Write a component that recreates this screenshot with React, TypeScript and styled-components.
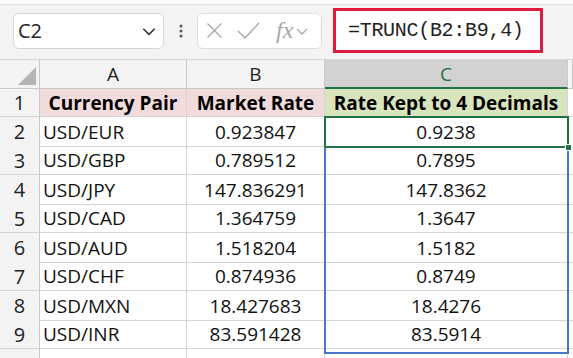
import styled, { createGlobalStyle } from "styled-components";

const GlobalStyle = createGlobalStyle`
  body {
    margin: 0;
    background: #ffffff;
    font-family: "Open Sans", Lato, sans-serif;
  }
  * { box-sizing: border-box; }
`;

interface RowData {
  pair: string;
  rate: string;
  kept: string;
}

const rows: RowData[] = [
  { pair: "USD/EUR", rate: "0.923847", kept: "0.9238" },
  { pair: "USD/GBP", rate: "0.789512", kept: "0.7895" },
  { pair: "USD/JPY", rate: "147.836291", kept: "147.8362" },
  { pair: "USD/CAD", rate: "1.364759", kept: "1.3647" },
  { pair: "USD/AUD", rate: "1.518204", kept: "1.5182" },
  { pair: "USD/CHF", rate: "0.874936", kept: "0.8749" },
  { pair: "USD/MXN", rate: "18.427683", kept: "18.4276" },
  { pair: "USD/INR", rate: "83.591428", kept: "83.5914" },
];

const Chevron = ({ color = "#444", size = 14 }: { color?: string; size?: number }) => (
  <svg width={size} height={size} viewBox="0 0 14 14">
    <polyline points="2,5 7,10 12,5" fill="none" stroke={color} strokeWidth="1.4" />
  </svg>
);

const App = () => {
  return (
    <Page>
      <GlobalStyle />
      <TopStrip />
      <FormulaBar>
        <NameBox>
          <NameText>C2</NameText>
          <Chevron color="#333" size={16} />
        </NameBox>
        <Dots>
          <svg width="4" height="14" viewBox="0 0 4 14">
            <circle cx="2" cy="2" r="1.5" fill="#555" />
            <circle cx="2" cy="7" r="1.5" fill="#555" />
            <circle cx="2" cy="12" r="1.5" fill="#555" />
          </svg>
        </Dots>
        <ActionBox>
          <svg width="17" height="17" viewBox="0 0 17 17">
            <path d="M1.5 1.5 L15.5 15.5 M15.5 1.5 L1.5 15.5" stroke="#a6a6a6" strokeWidth="1.3" />
          </svg>
          <svg width="23" height="17" viewBox="0 0 23 17">
            <polyline points="1,9 8,16 22,1" fill="none" stroke="#a6a6a6" strokeWidth="1.3" />
          </svg>
          <FxLabel>fx</FxLabel>
          <Chevron color="#a6a6a6" size={14} />
        </ActionBox>
        <FormulaInput>=TRUNC(B2:B9,4)</FormulaInput>
      </FormulaBar>

      <SheetWrap>
        <Grid>
          <Corner>
            <svg width="20" height="20" viewBox="0 0 20 20">
              <polygon points="20,2 20,20 2,20" fill="#b4b4b4" />
            </svg>
          </Corner>
          <ColHeader>A</ColHeader>
          <ColHeader>B</ColHeader>
          <ColHeader $active>C</ColHeader>
          <ColHeader />

          <RowHeader>1</RowHeader>
          <HeadCell $bg="#f2dcdb">Currency Pair</HeadCell>
          <HeadCell $bg="#f2dcdb">Market Rate</HeadCell>
          <HeadCell $bg="#d8e4bc">Rate Kept to 4 Decimals</HeadCell>
          <Cell />

          {rows.map((r, i) => (
            <Row key={r.pair} $h={i % 2 === 0 ? 30 : 29}>
              <RowHeader>{i + 2}</RowHeader>
              <Cell>{r.pair}</Cell>
              <Cell $center>{r.rate}</Cell>
              <Cell $center>{r.kept}</Cell>
              <Cell />
            </Row>
          ))}

          <RowHeader />
          <Cell />
          <Cell />
          <Cell />
          <Cell />
        </Grid>
        <RangeBox />
        <ActiveBox>
          <FillHandle />
        </ActiveBox>
      </SheetWrap>
    </Page>
  );
};

export default App;

const Page = styled.div`
  width: 573px;
  height: 358px;
  overflow: hidden;
  background: #f3f3f3;
`;

const TopStrip = styled.div`
  height: 5px;
  background: #fbfbfb;
  border-bottom: 1px solid #e2e2e2;
`;

const FormulaBar = styled.div`
  display: flex;
  align-items: center;
  height: 54px;
  padding-left: 13px;
`;

const NameBox = styled.div`
  display: flex;
  align-items: center;
  justify-content: space-between;
  width: 151px;
  height: 36px;
  margin-top: -3px;
  padding: 0 6px 0 4px;
  background: #ffffff;
  border: 1px solid #d6d6d6;
  border-radius: 6px;
`;

const NameText = styled.span`
  font-family: "Open Sans", sans-serif;
  font-size: 20px;
  color: #222;
`;

const Dots = styled.div`
  display: flex;
  align-items: center;
  justify-content: center;
  width: 33px;
  margin-top: -3px;
`;

const ActionBox = styled.div`
  display: flex;
  align-items: center;
  gap: 14px;
  width: 125px;
  height: 36px;
  margin-top: -3px;
  padding: 0 0 0 8px;
  background: #ffffff;
  border: 1px solid #dedede;
  border-radius: 6px;
`;

const FxLabel = styled.span`
  font-family: "Liberation Serif", serif;
  font-style: italic;
  font-size: 24px;
  color: #a6a6a6;
  margin-left: 2px;
  margin-right: -12px;
`;

const FormulaInput = styled.div`
  display: flex;
  align-items: center;
  width: 210px;
  height: 45px;
  margin-left: 11px;
  margin-top: -3px;
  padding-left: 12px;
  background: #ffffff;
  border: 3px solid #e0193f;
  font-family: "Liberation Mono", monospace;
  font-size: 20px;
  color: #222;
  letter-spacing: -0.3px;
`;

const SheetWrap = styled.div`
  position: relative;
`;

const Grid = styled.div`
  display: grid;
  grid-template-columns: 40px 147px 138px 243px 5px;
  grid-template-rows: 29px 28px;
  grid-auto-rows: 29px;
  background: #ffffff;
  border-top: 1px solid #dadada;
  font-size: 19px;
`;

const Row = styled.div<{ $h: number }>`
  display: contents;
  & > * {
    height: ${(p) => p.$h}px;
  }
`;

const Corner = styled.div`
  display: flex;
  align-items: flex-end;
  justify-content: flex-end;
  padding: 0 3px 3px 0;
  background: #f3f3f3;
  border-right: 1px solid #c8c8c8;
  border-bottom: 1px solid #c8c8c8;
`;

const ColHeader = styled.div<{ $active?: boolean }>`
  display: flex;
  align-items: center;
  justify-content: center;
  background: ${(p) => (p.$active ? "#d2d2d2" : "#f3f3f3")};
  color: ${(p) => (p.$active ? "#217346" : "#222")};
  border-right: 1px solid #c8c8c8;
  border-bottom: ${(p) => (p.$active ? "2px solid #217346" : "1px solid #c8c8c8")};
`;

const RowHeader = styled.div`
  display: flex;
  align-items: center;
  justify-content: center;
  background: #f3f3f3;
  color: #222;
  font-size: 20px;
  border-right: 1px solid #c8c8c8;
  border-bottom: 1px solid #d4d4d4;
`;

const Cell = styled.div<{ $center?: boolean }>`
  display: flex;
  align-items: center;
  justify-content: ${(p) => (p.$center ? "center" : "flex-start")};
  padding: 0 3px;
  color: #111;
  white-space: nowrap;
  overflow: hidden;
  border-right: 1px solid #d4d4d4;
  border-bottom: 1px solid #d4d4d4;
`;

const HeadCell = styled(Cell)<{ $bg: string }>`
  justify-content: center;
  background: ${(p) => p.$bg};
  font-weight: 700;
  color: #000;
`;

const RangeBox = styled.div`
  position: absolute;
  left: 324px;
  top: 57px;
  width: 245px;
  height: 238px;
  border: 2px solid #4a76c6;
  pointer-events: none;
`;

const ActiveBox = styled.div`
  position: absolute;
  left: 324px;
  top: 57px;
  width: 245px;
  height: 32px;
  border: 2px solid #217346;
  pointer-events: none;
`;

const FillHandle = styled.div`
  position: absolute;
  right: -5px;
  bottom: -5px;
  width: 7px;
  height: 7px;
  background: #217346;
  border: 1px solid #ffffff;
`;
